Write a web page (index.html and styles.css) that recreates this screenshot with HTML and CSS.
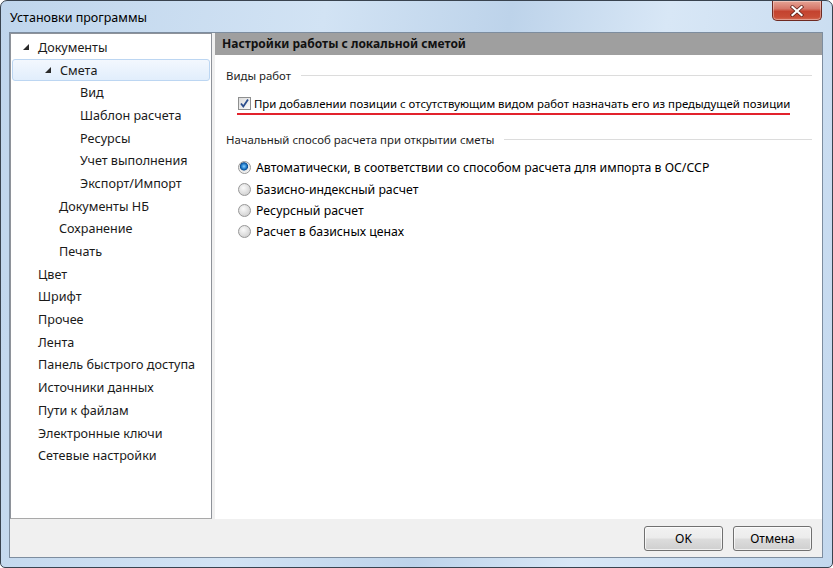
FILE: index.html
```html
<!DOCTYPE html>
<html lang="ru">
<head>
    <meta charset="UTF-8">
    <title>Установки программы</title>
    <link rel="stylesheet" href="styles.css">
</head>
<body>
<div class="window">
    <div class="titlebar">
        <span class="title">Установки программы</span>
        <div class="close-btn">
            <svg width="14" height="12" viewBox="0 0 14 12">
                <path d="M2.5 2 L11.5 10 M11.5 2 L2.5 10" stroke="#5a1d16" stroke-width="3.6" stroke-linecap="square"/>
                <path d="M2.5 2 L11.5 10 M11.5 2 L2.5 10" stroke="#ffffff" stroke-width="2.2" stroke-linecap="square"/>
            </svg>
        </div>
    </div>

    <div class="client">
        <div class="main">
            <!-- дерево разделов -->
            <ul class="tree">
                <li class="lvl0"><span class="arrow"><svg width="7" height="7" viewBox="0 0 7 7"><polygon points="6,0 6,6 0,6" fill="#2a2a2a"/></svg></span>Документы</li>
                <li class="lvl1 selected"><span class="arrow"><svg width="7" height="7" viewBox="0 0 7 7"><polygon points="6,0 6,6 0,6" fill="#2a2a2a"/></svg></span>Смета</li>
                <li class="lvl2">Вид</li>
                <li class="lvl2">Шаблон расчета</li>
                <li class="lvl2">Ресурсы</li>
                <li class="lvl2">Учет выполнения</li>
                <li class="lvl2">Экспорт/Импорт</li>
                <li class="lvl1">Документы НБ</li>
                <li class="lvl1">Сохранение</li>
                <li class="lvl1">Печать</li>
                <li class="lvl0">Цвет</li>
                <li class="lvl0">Шрифт</li>
                <li class="lvl0">Прочее</li>
                <li class="lvl0">Лента</li>
                <li class="lvl0">Панель быстрого доступа</li>
                <li class="lvl0">Источники данных</li>
                <li class="lvl0">Пути к файлам</li>
                <li class="lvl0">Электронные ключи</li>
                <li class="lvl0">Сетевые настройки</li>
            </ul>

            <!-- настройки -->
            <div class="panel">
                <div class="panel-head">Настройки работы с локальной сметой</div>

                <div class="group-label first"><span>Виды работ</span><i></i></div>
                <label class="check-row">
                    <span class="checkbox checked">
                        <svg width="11" height="11" viewBox="0 0 11 11"><path d="M2 5.5 L4.3 8.5 L9 1.5" fill="none" stroke="#2b4d8c" stroke-width="1.8"/></svg>
                    </span>
                    При добавлении позиции с отсутствующим видом работ назначать его из предыдущей позиции
                </label>

                <div class="group-label"><span>Начальный способ расчета при открытии сметы</span><i></i></div>
                <div class="radios">
                    <div class="radio-row"><span class="radio on"></span>Автоматически, в соответствии со способом расчета для импорта в ОС/ССР</div>
                    <div class="radio-row"><span class="radio"></span>Базисно-индексный расчет</div>
                    <div class="radio-row"><span class="radio"></span>Ресурсный расчет</div>
                    <div class="radio-row"><span class="radio"></span>Расчет в базисных ценах</div>
                </div>
            </div>
        </div>

        <div class="footer">
            <button class="btn">OK</button>
            <button class="btn">Отмена</button>
        </div>
    </div>
</div>
</body>
</html>
```

FILE: styles.css
```css
* {
    box-sizing: border-box;
}

body {
    margin: 0;
    background: #ffffff;
    font-family: "Noto Sans", "Open Sans", sans-serif;
    font-size: 12px;
    color: #000;
}

.window {
    width: 833px;
    height: 568px;
    border: 1px solid #39434f;
    border-radius: 7px 7px 5px 5px;
    padding: 0 9px 9px 8px;
    background: linear-gradient(100deg, #bfd5ec 0%, #d2e3f4 35%, #bdd3ea 55%, #d8e7f6 72%, #c3d8ee 100%);
    display: flex;
    flex-direction: column;
}

/* заголовок окна */
.titlebar {
    height: 31px;
    display: flex;
    justify-content: space-between;
    align-items: flex-start;
    padding-left: 1px;
}

.title {
    line-height: 33px;
    font-size: 12.5px;
    color: #000;
}

.close-btn {
    width: 50px;
    height: 20px;
    margin-right: 1px;
    border: 1px solid #6e2a22;
    border-top: none;
    border-radius: 0 0 5px 5px;
    background: linear-gradient(#e6a495, #d6786a 40%, #c4432f 55%, #c84d36 85%, #d66f59);
    display: flex;
    align-items: center;
    justify-content: center;
    box-shadow: inset 0 0 0 1px rgba(255, 255, 255, 0.35);
}

/* клиентская область */
.client {
    flex: 1;
    border: 1px solid #7d8d9f;
    background: #f0f0f0;
    display: flex;
    flex-direction: column;
}

.main {
    height: 486px;
    display: flex;
    gap: 3px;
}

.tree {
    width: 202px;
    margin: 0;
    padding: 2px 0 0;
    list-style: none;
    background: #fff;
    border: 1px solid #8e9299;
    border-bottom-color: #a9a9a9;
    font-size: 12.6px;
}

.tree li {
    height: 22.7px;
    display: flex;
    align-items: center;
    margin: 0 1px;
    color: #1a1a1a;
    white-space: nowrap;
}

.tree .lvl0 { padding-left: 26px; }
.tree .lvl1 { padding-left: 47px; }
.tree .lvl2 { padding-left: 68px; }

.tree .arrow {
    width: 7px;
    height: 7px;
    margin-left: -15px;
    margin-right: 8px;
    display: flex;
}

.tree .selected {
    border: 1px solid #bcd6f2;
    border-radius: 3px;
    background: linear-gradient(#f3f8fe, #e1eefc);
}

.panel {
    flex: 1;
    background: #fff;
    font-size: 11.4px;
}

.panel-head {
    height: 22px;
    line-height: 22px;
    padding-left: 7px;
    background: #9f9f9f;
    font-size: 12px;
    font-weight: bold;
    color: #111;
}

.group-label {
    display: flex;
    align-items: center;
    height: 16px;
    margin: 16px 10px 0 11px;
    color: #1e1e1e;
}

.group-label.first {
    margin-top: 12px;
}

.group-label i {
    flex: 1;
    height: 1px;
    margin-left: 10px;
    background: #dcdcdc;
}

.check-row {
    display: inline-flex;
    align-items: center;
    gap: 3px;
    height: 20px;
    margin: 12px 0 0 22px;
    padding: 0 0 2px 1px;
    border-bottom: 2px solid #e2222c;
}

.checkbox {
    width: 13px;
    height: 13px;
    border: 1px solid #8e8f8f;
    background: linear-gradient(135deg, #dcdcdc, #fbfbfb);
    display: flex;
    align-items: center;
    justify-content: center;
}

.radios {
    margin: 10px 0 0 23px;
    font-size: 12.3px;
}

.radio-row {
    height: 21.4px;
    display: flex;
    align-items: center;
    gap: 5px;
}

.radio {
    width: 13px;
    height: 13px;
    border-radius: 50%;
    border: 1px solid #979797;
    background: radial-gradient(circle at 40% 35%, #fafafa, #d6d6d6 70%, #c4c4c4);
}

.radio.on {
    background: radial-gradient(circle at 45% 40%, #8ed0ff 0, #2a86d2 25%, #0c4f95 42%, #e6e6e6 50%, #f4f4f4 75%, #cfcfcf);
}

/* кнопки */
.footer {
    flex: 1;
    display: flex;
    justify-content: flex-end;
    align-items: flex-start;
    gap: 10px;
    padding: 7px 10px 0 0;
}

.btn {
    width: 79px;
    height: 25px;
    font-family: inherit;
    font-size: 12px;
    color: #000;
    border: 1px solid #707070;
    border-radius: 3px;
    background: linear-gradient(#f2f2f2, #ebebeb 49%, #dddddd 51%, #cfcfcf);
    box-shadow: inset 0 0 0 1px rgba(255, 255, 255, 0.7);
}
```
